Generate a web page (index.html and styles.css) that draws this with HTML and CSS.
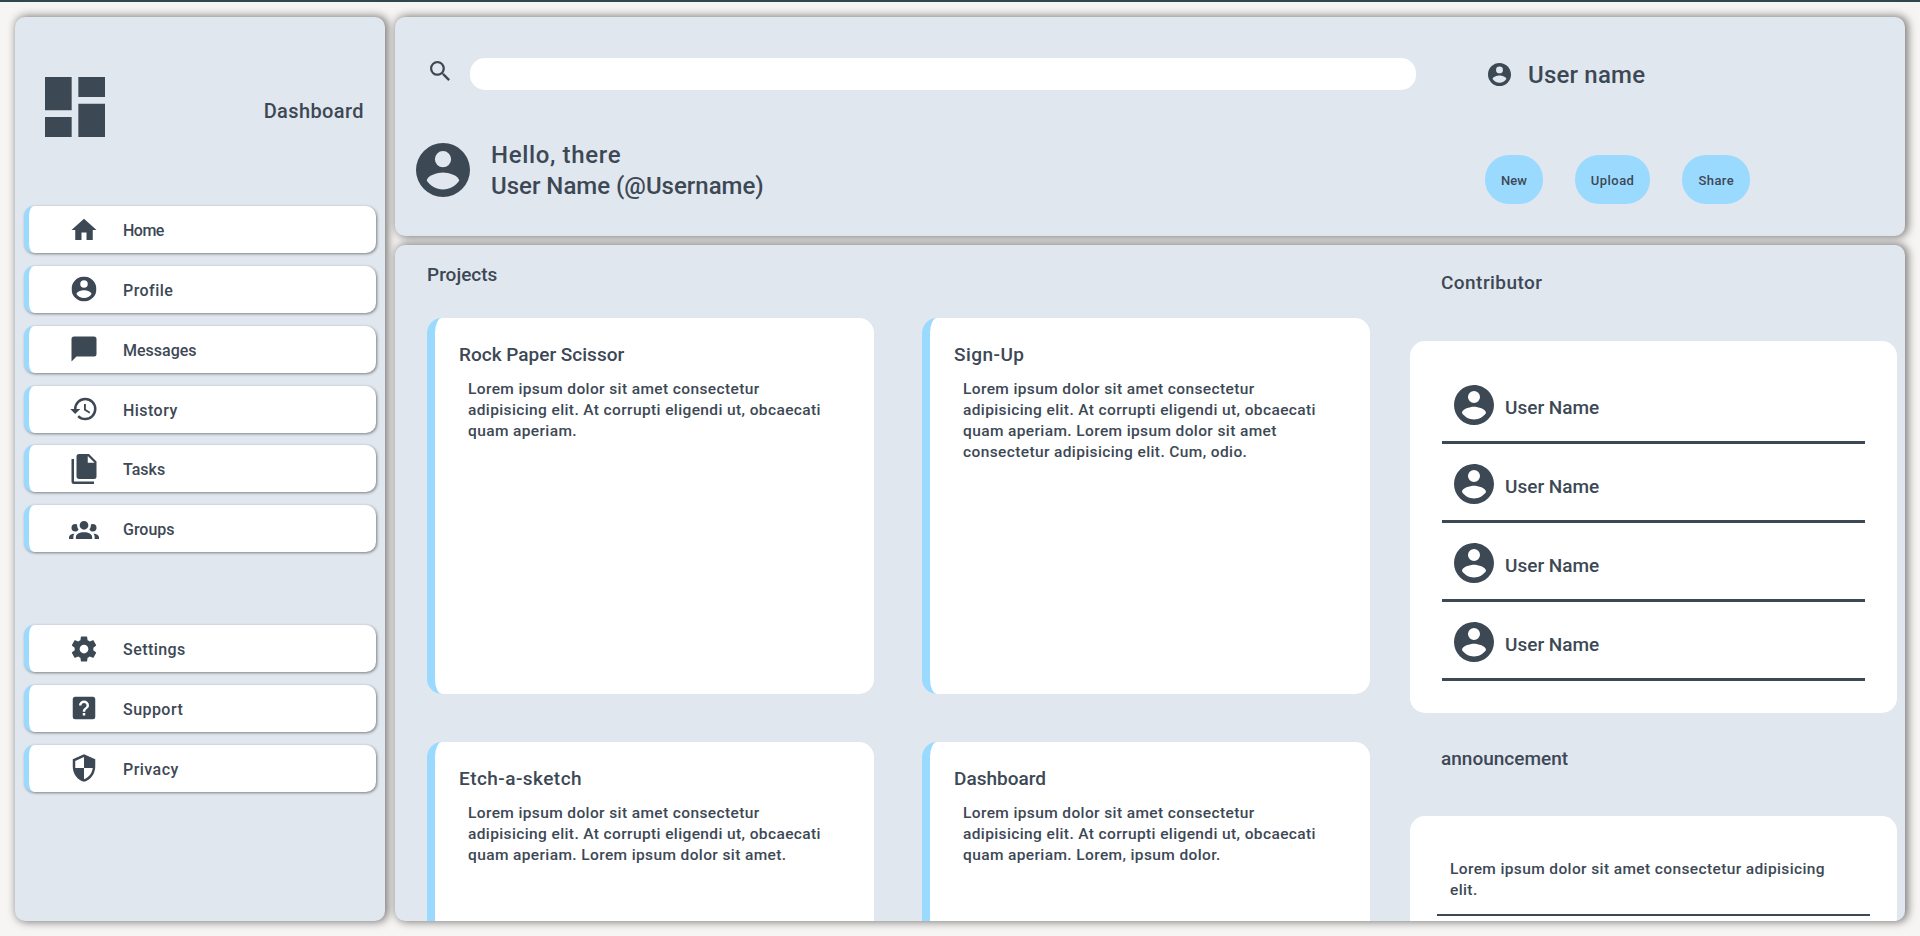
FILE: index.html
```html
<!DOCTYPE html>
<html lang="en">
<head>
<meta charset="utf-8">
<title>Dashboard</title>
<link rel="stylesheet" href="styles.css">
</head>
<body>
<svg class="sprite" width="0" height="0">
  <symbol id="account" viewBox="2 2 20 20"><path d="M12,19.2C9.5,19.2 7.29,17.92 6,16C6.03,14 10,12.9 12,12.9C14,12.9 17.97,14 18,16C16.71,17.92 14.5,19.2 12,19.2M12,5A3,3 0 0,1 15,8A3,3 0 0,1 12,11A3,3 0 0,1 9,8A3,3 0 0,1 12,5M12,2A10,10 0 0,0 2,12A10,10 0 0,0 12,22A10,10 0 0,0 22,12C22,6.47 17.5,2 12,2Z"/></symbol>
</svg>
<div class="app">
  <aside class="sidebar">
    <div class="brand">
      <svg class="brand-logo" viewBox="3 3 18 18"><path d="M3 13h8V3H3zM3 21h8v-6H3zM13 21h8V11h-8zM13 3v6h8V3z"/></svg>
      <h1 class="brand-name">Dashboard</h1>
    </div>
    <nav class="nav">
      <a class="nav-item"><svg class="icon" viewBox="0 0 24 24"><path d="M10,20V14H14V20H19V12H22L12,3L2,12H5V20H10Z"/></svg><span class="tight">Home</span></a>
      <a class="nav-item"><svg class="icon" viewBox="0 0 24 24"><use href="#account" x="2" y="2" width="20" height="20"/></svg><span class="wide">Profile</span></a>
      <a class="nav-item"><svg class="icon" viewBox="0 0 24 24"><path d="M20,2H4A2,2 0 0,0 2,4V22L6,18H20A2,2 0 0,0 22,16V4A2,2 0 0,0 20,2Z"/></svg><span>Messages</span></a>
      <a class="nav-item"><svg class="icon" viewBox="0 0 24 24"><path d="M13.5,8H12V13L16.28,15.54L17,14.33L13.5,12.25V8M13,3A9,9 0 0,0 4,12H1L4.96,16.03L9,12H6A7,7 0 0,1 13,5A7,7 0 0,1 20,12A7,7 0 0,1 13,19C11.07,19 9.32,18.21 8.06,16.94L6.64,18.36C8.27,20 10.5,21 13,21A9,9 0 0,0 22,12A9,9 0 0,0 13,3"/></svg><span class="wide">History</span></a>
      <a class="nav-item"><svg class="icon" viewBox="0 0 24 24"><path d="M15,7H20.5L15,1.5V7M8,0H16L22,6V18A2,2 0 0,1 20,20H8C6.89,20 6,19.1 6,18V2A2,2 0 0,1 8,0M4,4V22H20V24H4A2,2 0 0,1 2,22V4H4Z"/></svg><span>Tasks</span></a>
      <a class="nav-item"><svg class="icon" viewBox="0 0 24 24"><path d="M12,5.5A3.5,3.5 0 0,1 15.5,9A3.5,3.5 0 0,1 12,12.5A3.5,3.5 0 0,1 8.5,9A3.5,3.5 0 0,1 12,5.5M5,8C5.56,8 6.08,8.15 6.53,8.42C6.38,9.85 6.8,11.27 7.66,12.38C7.16,13.34 6.16,14 5,14A3,3 0 0,1 2,11A3,3 0 0,1 5,8M19,8A3,3 0 0,1 22,11A3,3 0 0,1 19,14C17.84,14 16.84,13.34 16.34,12.38C17.2,11.27 17.62,9.85 17.47,8.42C17.92,8.15 18.44,8 19,8M5.5,18.25C5.5,16.18 8.41,14.5 12,14.5C15.59,14.5 18.5,16.18 18.5,18.25V20H5.5V18.25M0,20V18.5C0,17.11 1.89,15.94 4.45,15.6C3.86,16.28 3.5,17.22 3.5,18.25V20H0M24,20H20.5V18.25C20.5,17.22 20.14,16.28 19.55,15.6C22.11,15.94 24,17.11 24,18.5V20Z"/></svg><span>Groups</span></a>
    </nav>
    <nav class="nav nav-secondary">
      <a class="nav-item"><svg class="icon" viewBox="0 0 24 24"><path d="M12,15.5A3.5,3.5 0 0,1 8.5,12A3.5,3.5 0 0,1 12,8.5A3.5,3.5 0 0,1 15.5,12A3.5,3.5 0 0,1 12,15.5M19.43,12.97C19.47,12.65 19.5,12.33 19.5,12C19.5,11.67 19.47,11.34 19.43,11L21.54,9.37C21.73,9.22 21.78,8.95 21.66,8.73L19.66,5.27C19.54,5.05 19.27,4.96 19.05,5.05L16.56,6.05C16.04,5.66 15.5,5.32 14.87,5.07L14.5,2.42C14.46,2.18 14.25,2 14,2H10C9.75,2 9.54,2.18 9.5,2.42L9.13,5.07C8.5,5.32 7.96,5.66 7.44,6.05L4.95,5.05C4.73,4.96 4.46,5.05 4.34,5.27L2.34,8.73C2.21,8.95 2.27,9.22 2.46,9.37L4.57,11C4.53,11.34 4.5,11.67 4.5,12C4.5,12.33 4.53,12.65 4.57,12.97L2.46,14.63C2.27,14.78 2.21,15.05 2.34,15.27L4.34,18.73C4.46,18.95 4.73,19.03 4.95,18.95L7.44,17.94C7.96,18.34 8.5,18.68 9.13,18.93L9.5,21.58C9.54,21.82 9.75,22 10,22H14C14.25,22 14.46,21.82 14.5,21.58L14.87,18.93C15.5,18.67 16.04,18.34 16.56,17.94L19.05,18.95C19.27,19.03 19.54,18.95 19.66,18.73L21.66,15.27C21.78,15.05 21.73,14.78 21.54,14.63L19.43,12.97Z"/></svg><span class="wide">Settings</span></a>
      <a class="nav-item"><svg class="icon" viewBox="0 0 24 24"><path d="M11,18H13V16H11V18M12,6A4,4 0 0,0 8,10H10A2,2 0 0,1 12,8A2,2 0 0,1 14,10C14,12 11,11.75 11,15H13C13,12.75 16,12.5 16,10A4,4 0 0,0 12,6M5,3H19A2,2 0 0,1 21,5V19A2,2 0 0,1 19,21H5A2,2 0 0,1 3,19V5A2,2 0 0,1 5,3Z"/></svg><span class="wide">Support</span></a>
      <a class="nav-item"><svg class="icon" viewBox="0 0 24 24"><path d="M12,12H19C18.47,16.11 15.72,19.78 12,20.92V12H5V6.3L12,3.19M12,1L3,5V11C3,16.55 6.84,21.73 12,23C17.16,21.73 21,16.55 21,11V5L12,1Z"/></svg><span class="wide">Privacy</span></a>
    </nav>
  </aside>

  <header class="header">
    <div class="search">
      <svg class="search-icon" viewBox="3 3 17.5 17.5"><path d="M9.5,3A6.5,6.5 0 0,1 16,9.5C16,11.11 15.41,12.59 14.44,13.73L14.71,14H15.5L20.5,19L19,20.5L14,15.5V14.71L13.73,14.44C12.59,15.41 11.11,16 9.5,16A6.5,6.5 0 0,1 3,9.5A6.5,6.5 0 0,1 9.5,3M9.5,5C7,5 5,7 5,9.5C5,12 7,14 9.5,14C12,14 14,12 14,9.5C14,7 12,5 9.5,5Z"/></svg>
      <input class="search-input" type="text" aria-label="Search">
    </div>
    <div class="user">
      <svg class="user-icon"><use href="#account"/></svg>
      <span class="user-name">User name</span>
    </div>
    <div class="greeting">
      <svg class="greeting-icon"><use href="#account"/></svg>
      <div class="greeting-text">
        <p class="greeting-hello">Hello, there</p>
        <p>User Name (@Username)</p>
      </div>
    </div>
    <div class="actions">
      <button class="button">New</button>
      <button class="button wide">Upload</button>
      <button class="button wide">Share</button>
    </div>
  </header>

  <main class="main">
    <section class="projects">
      <h2 class="title">Projects</h2>
      <div class="cards">
        <article class="card"><h3 class="title">Rock Paper Scissor</h3><p class="text">Lorem ipsum dolor sit amet consectetur adipisicing elit. At corrupti eligendi ut, obcaecati quam aperiam.</p></article>
        <article class="card"><h3 class="title wide">Sign-Up</h3><p class="text">Lorem ipsum dolor sit amet consectetur adipisicing elit. At corrupti eligendi ut, obcaecati quam aperiam. Lorem ipsum dolor sit amet consectetur adipisicing elit. Cum, odio.</p></article>
        <article class="card"><h3 class="title wide">Etch-a-sketch</h3><p class="text">Lorem ipsum dolor sit amet consectetur adipisicing elit. At corrupti eligendi ut, obcaecati quam aperiam. Lorem ipsum dolor sit amet.</p></article>
        <article class="card"><h3 class="title">Dashboard</h3><p class="text">Lorem ipsum dolor sit amet consectetur adipisicing elit. At corrupti eligendi ut, obcaecati quam aperiam. Lorem, ipsum dolor.</p></article>
      </div>
    </section>
    <section class="side">
      <h2 class="title wide">Contributor</h2>
      <div class="contributors">
        <div class="contributor"><svg class="contributor-icon"><use href="#account"/></svg><span class="title">User Name</span></div>
        <div class="contributor"><svg class="contributor-icon"><use href="#account"/></svg><span class="title">User Name</span></div>
        <div class="contributor"><svg class="contributor-icon"><use href="#account"/></svg><span class="title">User Name</span></div>
        <div class="contributor"><svg class="contributor-icon"><use href="#account"/></svg><span class="title">User Name</span></div>
      </div>
      <h2 class="title announcement-title">announcement</h2>
      <div class="announcements">
        <p class="text announcement">Lorem ipsum dolor sit amet consectetur adipisicing elit.</p>
      </div>
    </section>
  </main>
</div>
</body>
</html>
```
FILE: styles.css
```css
* { box-sizing: border-box; margin: 0; }
body {
  height: 936px;
  overflow: hidden;
  background: #f6f5f3;
  border-top: 2px solid #2f474f;
  color: #3d4855;
  font-family: Roboto, "Open Sans", sans-serif;
  font-weight: 500;
}
svg { display: block; flex: none; fill: #3d4855; }
.sprite { position: absolute; }

.app {
  display: grid;
  grid-template: 219px 676px / 370px 1510px;
  gap: 9px 10px;
  padding: 15px;
}
.sidebar, .header, .main {
  background: #e1e7ef;
  border-radius: 10px;
  box-shadow: 2px 0 8px 1px rgba(0, 0, 0, .5);
}

/* Sidebar */
.sidebar { grid-row: span 2; padding: 60px 9px 0; }
.brand { display: flex; justify-content: space-between; padding: 0 12px 0 21px; height: 129.2px; }
.brand-logo { width: 60px; height: 60px; }
.brand-name { font-size: 20px; font-weight: 500; line-height: 24px; letter-spacing: .4px; margin-top: 22px; }
.nav { display: grid; gap: 12.8px; }
.nav-secondary { margin-top: 73px; }
.nav-item {
  display: flex;
  align-items: center;
  gap: 24px;
  height: 47px;
  padding-left: 40px;
  background: #fff;
  border-left: 5px solid #9bdaff;
  border-radius: 10px;
  box-shadow: 1px 1px 3px rgba(0, 0, 0, .45);
  font-size: 16px;
}
.icon { width: 30px; height: 30px; }
.nav-item span { padding-top: 2px; }

/* Header */
.header {
  display: grid;
  grid-template: 32px 60px / 1020px 1fr;
  column-gap: 49px;
  row-gap: 45px;
  padding: 41px 0 0 21px;
  align-items: start;
}
.search { display: flex; padding-left: 14px; gap: 20px; }
.search-icon { width: 20px; height: 20px; margin-top: 3px; }
.search-input { width: 946px; height: 32px; border: 0; border-radius: 15px; background: #fff; }
.user { display: flex; align-items: center; gap: 17px; padding-left: 3px; height: 32px; }
.user-icon { width: 23px; height: 23px; }
.user-name { font-size: 24px; letter-spacing: .2px; padding-top: 2px; }
.greeting { display: flex; align-items: flex-start; gap: 21px; padding-top: 5px; }
.greeting-icon { width: 54px; height: 54px; margin-top: 3px; }
.greeting-text { font-size: 24px; line-height: 31px; }
.greeting-hello { letter-spacing: .65px; }
.actions { display: flex; gap: 32px; padding-top: 20px; }
.button {
  height: 49px;
  padding: 2px 16px 0;
  border: 0;
  border-radius: 24px;
  background: #9bdaff;
  color: inherit;
  font: 500 13px Roboto, sans-serif;
}

/* Main area */
.main { display: grid; grid-template-columns: 943px 487px; column-gap: 40px; padding: 0 8px 0 32px; overflow: hidden; }
.title { font-size: 19px; font-weight: 500; line-height: 24px; }
.text { font-size: 15.5px; line-height: 21px; letter-spacing: .38px; }
.projects { padding-top: 18px; }
.cards { display: grid; grid-template-columns: 447px 448px; grid-auto-rows: 376px; gap: 48px; margin-top: 31px; }
.card { background: #fff; border-left: 8px solid #9bdaff; border-radius: 15px; padding: 25px 24px; }
.card .text { padding: 12px 12px 0 9px; }

.side { padding-top: 26px; }
.side > .title { padding-left: 31px; }
.contributors { margin-top: 46px; height: 372px; padding: 24px 32px; background: #fff; border-radius: 15px; }
.contributor { display: flex; gap: 11px; height: 79px; padding: 20px 0 0 12px; border-bottom: 3px solid #3d4855; }
.contributor-icon { width: 40px; height: 40px; }
.contributor .title { margin-top: 11px; }
.announcement-title { margin-top: 34px; }
.announcements { margin-top: 45px; height: 300px; padding: 43px 27px; background: #fff; border-radius: 15px; }
.announcement { padding: 0 40px 13px 13px; border-bottom: 2px solid #3d4855; }

/* Tracking adjustments */
.tight { letter-spacing: -.5px; }
.wide { letter-spacing: .45px; }
```
